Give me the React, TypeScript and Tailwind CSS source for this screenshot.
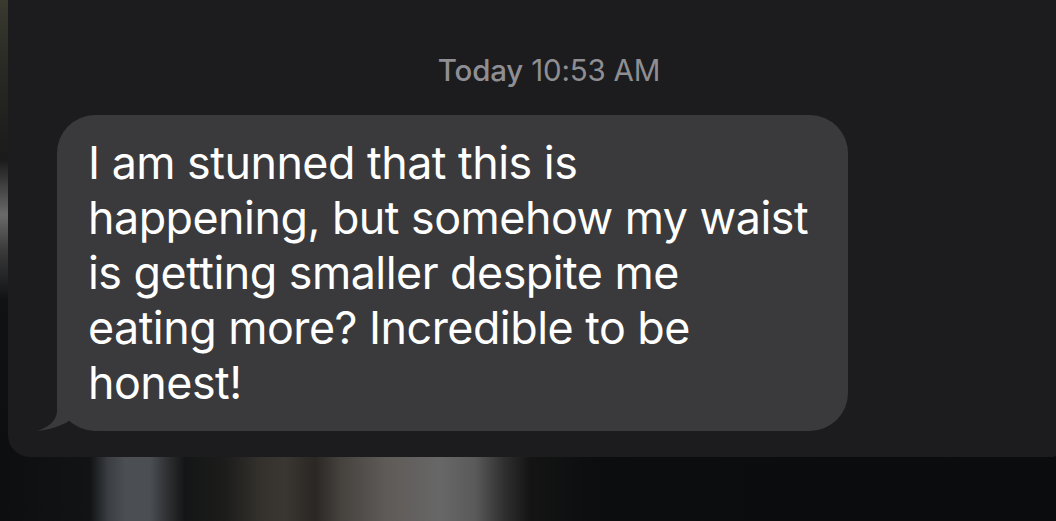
import React from 'react';

const lines = [
  'I am stunned that this is',
  'happening, but somehow my waist',
  'is getting smaller despite me',
  'eating more? Incredible to be',
  'honest!',
];

const BubbleTail: React.FC = () => (
  <svg
    className="absolute left-[-22px] bottom-0 w-[80px] h-[45px]"
    viewBox="0 0 80 45"
    fill="#3a3a3c"
  >
    <path d="M22 0 L22 25 C22 35 12 42 2 45 C12 44 28 40 35 34 C45 42 55 45 70 45 L80 45 L80 0 Z" />
  </svg>
);

export default function App() {
  return (
    <div
      className="relative w-[1056px] h-[521px] overflow-hidden flex flex-col bg-[linear-gradient(90deg,#0c0e10_0px,#111315_90px,#3a3d41_108px,#4b4e53_125px,#4b4e53_150px,#2a2c2e_170px,#141516_185px,#1c1c1b_225px,#34312d_260px,#3a3631_285px,#2a2724_315px,#45413d_340px,#5e5a57_385px,#686767_440px,#5a5a5a_475px,#2e2e2e_505px,#141414_530px,#0b0d0e_600px,#0a0c0d_1056px)]"
      style={{ fontFamily: 'Inter, "Liberation Sans", sans-serif' }}
    >
      {/* left photo edge */}
      <div className="absolute left-0 top-0 w-[8px] h-[457px] bg-[linear-gradient(180deg,#3a3a2f_0px,#2a2b25_60px,#1a1b1a_160px,#6a6a6a_215px,#3a3a3a_250px,#101214_300px,#0c0e10_457px)]" />

      {/* conversation panel */}
      <div className="relative ml-[8px] h-[457px] shrink-0 rounded-bl-[22px] rounded-br-[3px] bg-[#1c1c1e] flex flex-col">
        <div className="pt-[53px] text-center text-[29.5px] leading-[34px] text-[#8e8e93] tracking-[-0.2px] pl-[34px]">
          <span className="font-medium">Today</span> 10:53 AM
        </div>

        <div className="mt-[28px] ml-[49px]">
          <div className="relative w-[791px] rounded-[38px] bg-[#3a3a3c] pl-[31px] pr-[20px] pt-[21px] pb-[20px]">
            <BubbleTail />
            <p className="relative text-[44.8px] leading-[55px] text-white tracking-[-0.5px]">
              {lines.map((l, i) => (
                <React.Fragment key={i}>
                  {l}
                  {i < lines.length - 1 && <br />}
                </React.Fragment>
              ))}
            </p>
          </div>
        </div>
      </div>
    </div>
  );
}
